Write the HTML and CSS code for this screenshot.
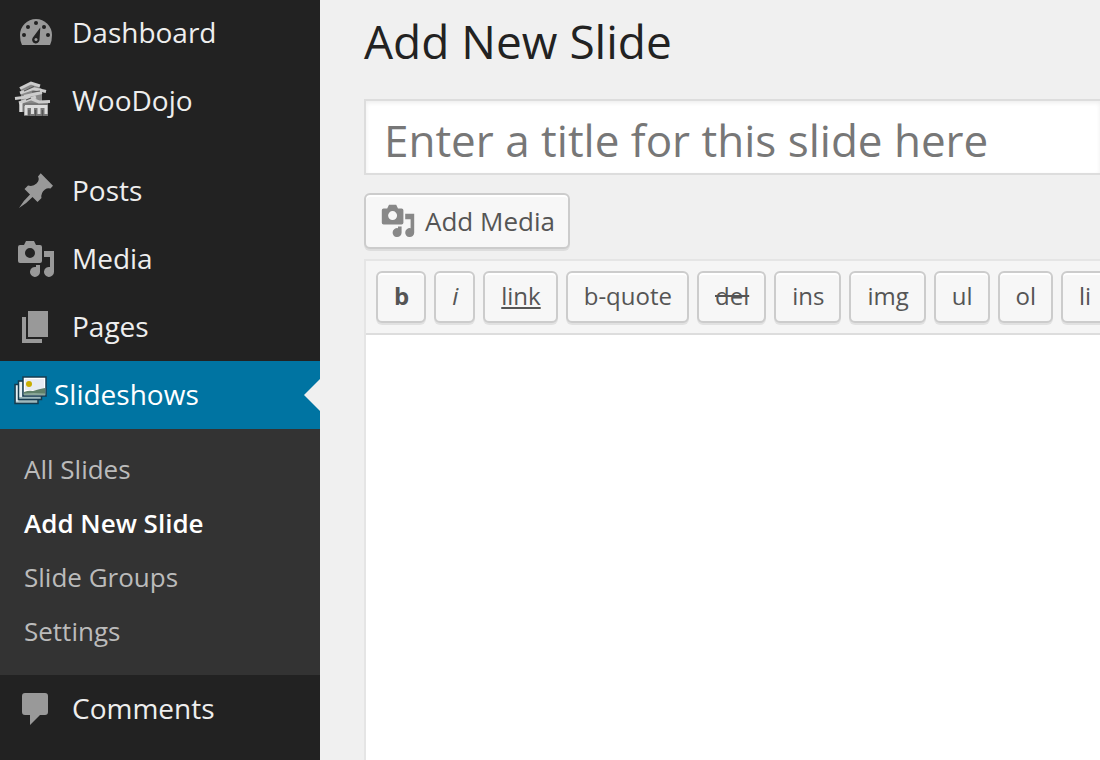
FILE: index.html
```html
<!DOCTYPE html>
<html lang="en">
<head>
<meta charset="utf-8">
<title>Add New Slide</title>
<link rel="stylesheet" href="styles.css">
</head>
<body>
<svg class="defs" aria-hidden="true">
  <symbol id="media" viewBox="0 0 40 40">
    <path fill-rule="evenodd" d="M4 6h4l2-4h8l2 4h4q2 0 2 2v14q0 2-2 2H4q-2 0-2-2V8q0-2 2-2zM14 9a5 5 0 1 0 0 10a5 5 0 1 0 0-10z"/>
    <path d="M28 12h10v21a5 5 0 1 1-4-5V18h-6zM20 26h4v7a5 5 0 1 1-4-5z"/>
  </symbol>
</svg>
<div class="layout">
  <nav class="sidebar" aria-label="Admin menu">
    <ul class="menu">
      <li><a class="item" href="#">
        <svg class="icon" viewBox="-4 0 44 40" aria-hidden="true">
          <path d="M6 32Q4 28 4 22A16 16 0 0 1 36 22Q36 28 34 32z"/>
          <g class="hole"><circle cx="20" cy="10" r="2"/><circle cx="12" cy="14" r="2"/><circle cx="28" cy="14" r="2"/><circle cx="8" cy="22" r="2"/><circle cx="32" cy="22" r="2"/><path d="M24.300 14.500L23.500 27a3.700 3.700 0 1 1-6.800-2.300z"/></g>
          <circle cx="20" cy="26.500" r="1.500"/>
        </svg>Dashboard</a></li>
      <li><a class="item" href="#">
        <svg class="icon" viewBox="0 0 44 40" aria-hidden="true">
          <path fill="#777" d="M7 21h29v14H12v-4H7z"/>
          <path fill="#888" d="M9 8L19 2L30 8V22H9z"/>
          <path fill="none" stroke="#ccc" stroke-width="3" d="M8 7.500L19 2L28 5M8 12L21 7.500L34 10.500M12 15.500L30 11.500M3 17.500L15 16L27 21L38 20.500M7 22L24 16"/>
          <path fill="none" stroke="#555" stroke-width="1.200" d="M12 10L22 5.500M20 11l8-1M14 19l5-2M17 29v6M23.500 29v6M30.500 29v6"/>
          <path fill="none" stroke="#ddd" stroke-width="3" d="M9 22v9M14 25v9M13 25.500h21M20.500 27v6M27 27v6M34 24v9"/>
        </svg>WooDojo</a></li>
      <li class="separator"></li>
      <li><a class="item" href="#">
        <svg class="icon" viewBox="-4 0 44 40" aria-hidden="true">
          <path d="M24.700 2.300L37 14.700L34.500 17.500Q31.500 16.500 29 18.500Q24.500 22 25.500 27L21.500 31L16.500 26Q10 33 3 37Q7 30 14 23.500L8.500 18L12 14.500Q17 16 20.500 12.500Q24 9 22 5.500z"/>
        </svg>Posts</a></li>
      <li><a class="item" href="#">
        <svg class="icon" viewBox="-4 0 44 40" aria-hidden="true"><use href="#media" width="40" height="40"/></svg>Media</a></li>
      <li><a class="item" href="#">
        <svg class="icon" viewBox="-4 0 44 40" aria-hidden="true"><path d="M12 4h20v26H12zM6 10h4v22h16v4H6z"/></svg>Pages</a></li>
      <li>
        <a class="item current" href="#">
          <svg class="icon slides" viewBox="0 0 36 40" aria-hidden="true">
            <g stroke="#173c50" stroke-width="1.500">
              <path fill="#9fb9bd" d="M3 9.500h23v19H3z"/><path fill="#e6f0f4" d="M4 10.500h2.500v16H4z" stroke="none"/>
              <path fill="#9fb9bd" d="M6.500 6h23v18.500h-23z"/><path fill="#e6f0f4" d="M7.500 7H10v15H7.500z" stroke="none"/>
              <path fill="#fff" d="M11 2h23v19H11z"/>
            </g>
            <path fill="#e6ebf2" d="M13 4h19v11H13z"/>
            <path fill="#5f8069" d="M12 17q5-2 9-1q6-2 12-3v7H12z"/>
            <path fill="#8aa899" d="M12 18.500q9-1 21 0V20H12z"/>
            <circle cx="17" cy="9" r="3" fill="#c8ae00"/>
          </svg>Slideshows</a>
        <ul class="submenu">
          <li><a href="#">All Slides</a></li>
          <li><a class="active" href="#" aria-current="page">Add New Slide</a></li>
          <li><a href="#">Slide Groups</a></li>
          <li><a href="#">Settings</a></li>
        </ul>
      </li>
      <li><a class="item" href="#">
        <svg class="icon" viewBox="-4 0 44 40" aria-hidden="true"><path d="M9 4h20q3 0 3 3v16q0 3-3 3h-5L14 36V26H9q-3 0-3-3V7q0-3 3-3z"/></svg>Comments</a></li>
    </ul>
  </nav>
  <main class="content">
    <h1 class="heading">Add New Slide</h1>
    <input class="title" type="text" aria-label="Slide title" placeholder="Enter a title for this slide here">
    <button class="button add-media" type="button">
      <svg class="media-icon" aria-hidden="true"><use href="#media"/></svg>Add Media</button>
    <section class="editor">
      <div class="toolbar">
        <button class="button tag bold" type="button">b</button>
        <button class="button tag italic" type="button">i</button>
        <button class="button tag underline" type="button">link</button>
        <button class="button tag" type="button">b-quote</button>
        <button class="button tag strike" type="button">del</button>
        <button class="button tag" type="button">ins</button>
        <button class="button tag" type="button">img</button>
        <button class="button tag" type="button">ul</button>
        <button class="button tag" type="button">ol</button>
        <button class="button tag" type="button">li</button>
      </div>
      <textarea class="text" aria-label="Slide content"></textarea>
    </section>
  </main>
</div>
</body>
</html>
```
FILE: styles.css
```css
* { box-sizing: border-box; }

body {
  margin: 0;
  background: #f0f0f0;
  color: #222;
  font-family: "Open Sans", sans-serif;
  overflow: hidden;
}

.defs { position: absolute; width: 0; height: 0; }

.layout { display: flex; height: 100vh; }

/* Sidebar */
.sidebar {
  flex: 0 0 320px;
  background: #222;
  overflow: hidden;
}

.menu, .submenu { margin: 0; padding: 0; list-style: none; }
.menu { margin-top: -1px; }

.item {
  display: flex;
  align-items: center;
  gap: 16px;
  height: 68px;
  padding: 0 0 2px 12px;
  color: #eee;
  font-size: 28px;
  font-weight: 500;
  text-decoration: none;
}

.icon { flex: none; width: 44px; height: 40px; margin-top: 2px; fill: #999; }
.hole { fill: #222; }
.separator { height: 22px; }

.current {
  position: relative;
  gap: 6px;
  background: #0074a2;
  color: #fff;
}

.current::after {
  content: "";
  position: absolute;
  right: 0;
  top: 18px;
  border: 16px solid transparent;
  border-left-width: 0;
  border-right-color: #f0f0f0;
}

.slides { width: 36px; }

.submenu { padding: 13px 0 17px; background: #333; }

.submenu a {
  display: block;
  padding-left: 24px;
  color: #bbb;
  font-size: 26px;
  line-height: 54px;
  text-decoration: none;
}

.submenu .active { color: #fff; font-weight: 600; }

/* Content */
.content {
  flex: 1;
  min-width: 0;
  display: flex;
  flex-direction: column;
  align-items: stretch;
  padding-left: 44px;
}

.heading {
  margin: 11px 0 28px;
  font-size: 46px;
  font-weight: 400;
  line-height: 60px;
}

.title {
  flex: none;
  width: 100%;
  height: 76px;
  padding: 6px 18px 0;
  border: 2px solid #ddd;
  border-right: 0;
  background: #fff;
  box-shadow: inset 0 2px 4px rgba(0, 0, 0, 0.07);
  color: #333;
  font: 44px "Open Sans", sans-serif;
}

.title::placeholder { color: #777; opacity: 1; }

.button {
  flex: none;
  border: 2px solid #ccc;
  border-radius: 6px;
  background: #f7f7f7;
  box-shadow: inset 0 2px 0 #fff, 0 2px 0 rgba(0, 0, 0, 0.08);
  color: #555;
  font-family: "Open Sans", sans-serif;
}

.add-media {
  display: flex;
  align-items: center;
  align-self: flex-start;
  gap: 9px;
  height: 56px;
  margin: 18px 0 11px;
  padding: 0 13px 0 14px;
  font-size: 26px;
}

.media-icon { width: 36px; height: 36px; fill: #888; }

.editor {
  flex: 1;
  display: flex;
  flex-direction: column;
  border-left: 2px solid #e5e5e5;
}

.toolbar {
  display: flex;
  gap: 8px;
  padding: 10px 0 10px 10px;
  border-top: 2px solid #e5e5e5;
  border-bottom: 2px solid #ddd;
  background: #f5f5f5;
  overflow: hidden;
}

.add-media { margin-bottom: 10px; }

.tag { height: 52px; padding: 0 15px 4px 16px; font-size: 24px; }
.bold { font-weight: 700; }
.italic { font-style: italic; }
.underline { text-decoration: underline; }
.strike { text-decoration: line-through; }

.text {
  flex: 1;
  width: 100%;
  padding: 20px;
  border: 0;
  outline: 0;
  resize: none;
  background: #fff;
  color: #333;
  font: 26px "Open Sans", sans-serif;
}
```
